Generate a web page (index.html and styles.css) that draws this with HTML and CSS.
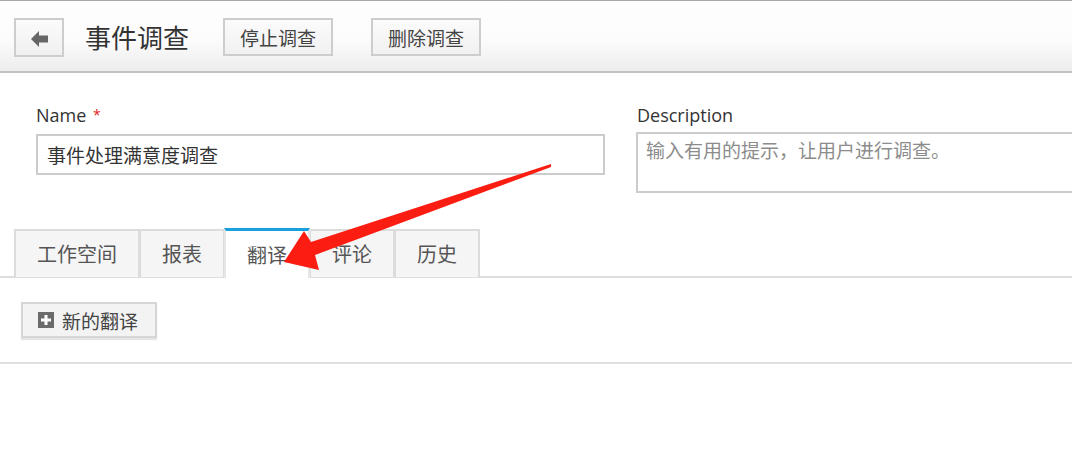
FILE: index.html
```
<!DOCTYPE html>
<html lang="zh-CN">
<head>
    <meta charset="UTF-8">
    <title>事件调查</title>
    <link rel="stylesheet" href="styles.css">
</head>
<body>
    <div class="topbar">
        <button class="back-btn" title="返回">
            <svg width="17" height="16" viewBox="0 0 17 16"><path d="M0 8 L8 0 L8 4.5 L17 4.5 L17 11.5 L8 11.5 L8 16 Z" fill="#666"/></svg>
        </button>
        <h1 class="page-title">事件调查</h1>
        <button class="bar-btn">停止调查</button>
        <button class="bar-btn bar-btn-last">删除调查</button>
    </div>

    <div class="form">
        <div class="field field-name">
            <label class="label">Name <span class="req">*</span></label>
            <input class="input" type="text" value="事件处理满意度调查">
        </div>
        <div class="field field-desc">
            <label class="label">Description</label>
            <textarea class="textarea" placeholder="输入有用的提示，让用户进行调查。"></textarea>
        </div>
    </div>

    <div class="tabs">
        <div class="tab">工作空间</div>
        <div class="tab">报表</div>
        <div class="tab active">翻译</div>
        <div class="tab">评论</div>
        <div class="tab">历史</div>
    </div>

    <div class="tab-body">
        <button class="add-btn">
            <span class="plus-icon">
                <svg width="16" height="16" viewBox="0 0 16 16"><rect width="16" height="16" fill="#6b6b6b"/><path d="M6.5 3 H9.5 V6.5 H13 V9.5 H9.5 V13 H6.5 V9.5 H3 V6.5 H6.5 Z" fill="#fff"/></svg>
            </span>
            新的翻译
        </button>
    </div>

    <!-- 标注箭头 -->
    <svg class="pointer" width="1072" height="473" viewBox="0 0 1072 473">
        <polygon points="551,164 311,242 304,231 284,262 319,270 315,255 551,167" fill="#fb1c12"/>
    </svg>
</body>
</html>
```

FILE: styles.css
```
html, body {
    overflow: hidden;
}
body {
    margin: 0;
    font-family: "Open Sans", "Noto Sans CJK SC", sans-serif;
    color: #333;
    background: #fff;
    position: relative;
}
.topbar {
    height: 73px;
    box-sizing: border-box;
    border-top: 1px solid #a8a8a8;
    border-bottom: 2px solid #c2c2c2;
    background: linear-gradient(#fefefe 0%, #fcfcfc 55%, #ececec 100%);
    display: flex;
    align-items: flex-start;
    padding: 17px 0 0 14px;
}
.back-btn {
    width: 50px;
    height: 39px;
    border: 2px solid #cdcdcd;
    background: linear-gradient(#fbfbfb, #f0f0f0);
    display: flex;
    align-items: center;
    justify-content: center;
    padding: 2px 0 0 0;
    margin: 0;
}
.page-title {
    margin: 0 0 0 21px;
    font-size: 26px;
    font-weight: normal;
    line-height: 38px;
    color: #333;
    font-family: "Noto Sans CJK SC", sans-serif;
}
.bar-btn {
    margin: 0 0 0 34px;
    width: 110px;
    height: 38px;
    border: 2px solid #cdcdcd;
    background: linear-gradient(#fbfbfb, #f1f1f1);
    font-family: "Noto Sans CJK SC", sans-serif;
    font-size: 19px;
    color: #444;
    padding: 0;
}
.bar-btn-last {
    margin-left: 38px;
}
.form {
    display: flex;
    padding: 30px 0 0 36px;
    gap: 31px;
    overflow: hidden;
}
.field {
    display: flex;
    flex-direction: column;
    width: 569px;
    flex: none;
}
.field-desc {
    padding-left: 1px;
}
.label {
    font-size: 18px;
    line-height: 24px;
    margin-bottom: 5px;
    color: #333;
}
.req {
    color: #e41c1c;
    font-size: 14px;
    position: relative;
    top: -2px;
    margin-left: 2px;
}
.input {
    height: 41px;
    box-sizing: border-box;
    border: 2px solid #cccccc;
    font-family: "Noto Sans CJK SC", sans-serif;
    font-size: 19px;
    color: #333;
    padding: 0 9px;
    outline: none;
}
.textarea {
    height: 61px;
    box-sizing: border-box;
    border: 2px solid #cccccc;
    font-family: "Noto Sans CJK SC", sans-serif;
    font-size: 19px;
    line-height: 28px;
    color: #333;
    padding: 2px 8px;
    resize: none;
    outline: none;
    margin: 0 0 0 -1px;
}
.textarea::placeholder {
    color: #8c8c8c;
}
.tabs {
    display: flex;
    margin-top: 36px;
    padding-left: 14px;
    border-bottom: 2px solid #dedede;
    height: 47px;
}
.tab {
    height: 48px;
    box-sizing: border-box;
    padding: 0 21px;
    border: 2px solid #dcdcdc;
    border-bottom: none;
    margin-right: -1px;
    background: #f5f5f5;
    font-family: "Noto Sans CJK SC", sans-serif;
    font-size: 20px;
    line-height: 46px;
    color: #555;
}
.tab.active {
    background: #fff;
    border-color: #e6e6e6;
    border-top: 3px solid #18a0dc;
    height: 50px;
    margin-top: -1px;
    line-height: 48px;
    position: relative;
}
.tab-body {
    padding: 24px 0 24px 21px;
    border-bottom: 2px solid #e0e0e0;
}
.add-btn {
    display: flex;
    align-items: center;
    height: 36px;
    box-sizing: border-box;
    border: 2px solid #d6d6d6;
    background: #f3f3f3;
    box-shadow: 0 2px 1px #e6e6e6;
    padding: 0 17px 0 15px;
    font-family: "Noto Sans CJK SC", sans-serif;
    font-size: 19px;
    color: #444;
}
.plus-icon {
    display: flex;
    margin-right: 8px;
}
.pointer {
    position: absolute;
    left: 0;
    top: 0;
    pointer-events: none;
}
```
